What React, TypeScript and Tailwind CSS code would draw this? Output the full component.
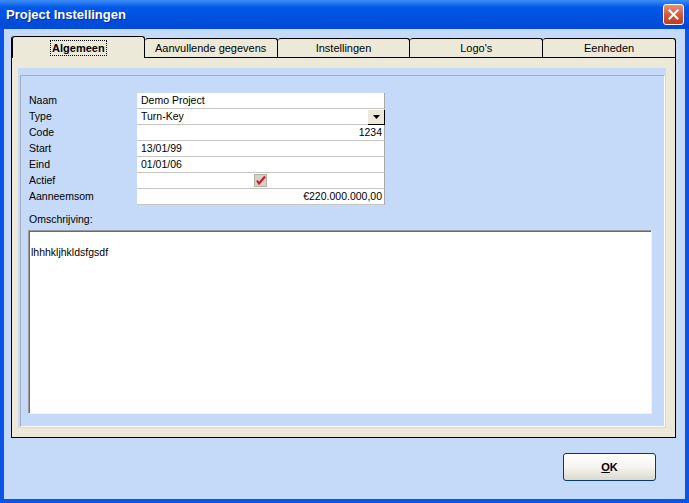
import type { ReactNode } from "react"

const TABS = ["Algemeen", "Aanvullende gegevens", "Instellingen", "Logo's", "Eenheden"]

interface Row {
  label: string
  value?: string
  align?: "left" | "right"
  kind?: "text" | "select" | "check"
}

const ROWS: Row[] = [
  { label: "Naam", value: "Demo Project" },
  { label: "Type", value: "Turn-Key", kind: "select" },
  { label: "Code", value: "1234", align: "right" },
  { label: "Start", value: "13/01/99" },
  { label: "Eind", value: "01/01/06" },
  { label: "Actief", kind: "check" },
  { label: "Aanneemsom", value: "€220.000.000,00", align: "right" },
]

function CloseButton() {
  return (
    <div className="flex h-[21px] w-[21px] items-center justify-center rounded-[3px] border border-white bg-linear-to-b from-[#e9917a] via-[#d9583a] to-[#c23b1d]">
      <svg width="11" height="11" viewBox="0 0 11 11">
        <path d="M1.5 1.5 L9.5 9.5 M9.5 1.5 L1.5 9.5" stroke="#fff" strokeWidth="2" strokeLinecap="square" />
      </svg>
    </div>
  )
}

function Tab({ label, active }: { label: string; active: boolean }) {
  if (active) {
    return (
      <div className="relative z-10 -mb-px flex h-[22px] w-[133px] items-start justify-center rounded-t-[3px] border-x border-t border-black bg-[#ece9d8] pt-[3px]">
        <span className="border border-dotted border-black px-[1px] text-[11px] leading-[14px] font-bold">{label}</span>
      </div>
    )
  }
  return (
    <div className="flex h-[19px] w-[133px] items-center justify-center rounded-t-[3px] border-r border-t border-black bg-[#ece9d8] text-[11px] leading-[14px]">
      {label}
    </div>
  )
}

function Field({ row }: { row: Row }) {
  let inner: ReactNode = null
  if (row.kind === "select") {
    inner = (
      <>
        <span className="flex-1 pl-[4px]">{row.value}</span>
        <div className="flex h-[15px] w-[17px] items-center justify-center border-l border-t border-white border-r-black border-b-black bg-[#ece9d8] shadow-[1px_1px_0_#000]">
          <svg width="7" height="4" viewBox="0 0 7 4">
            <path d="M0 0 H7 L3.5 4 Z" fill="#000" />
          </svg>
        </div>
      </>
    )
  } else if (row.kind === "check") {
    inner = (
      <div className="flex flex-1 justify-center">
        <svg width="13" height="13" viewBox="0 0 13 13">
          <rect x="0.5" y="0.5" width="12" height="12" fill="#d4d0cc" stroke="#b4b0a8" />
          <path d="M3 6.5 L5 9.5 L11 2.5" stroke="#d8141c" strokeWidth="2" fill="none" />
        </svg>
      </div>
    )
  } else {
    inner = <span className={`flex-1 ${row.align === "right" ? "pr-[2px] text-right" : "pl-[4px]"}`}>{row.value}</span>
  }
  return (
    <div className="flex h-[16px] items-center border-b border-r border-b-[#c4c4c4] border-r-[#a8a8a8] bg-white text-[10.5px] leading-[15px]">
      {inner}
    </div>
  )
}

export default function App() {
  return (
    <div className="flex h-[503px] w-[689px] flex-col font-['Liberation_Sans',Arial,sans-serif] text-black select-none">
      <div className="flex h-[29px] items-center justify-between bg-linear-to-b from-[#3b8cf6] via-[#0058e8] via-25% to-[#0049d6] pl-[6px] pr-[5px]">
        <span className="text-[13px] font-bold text-white [text-shadow:1px_1px_0_#0b2a8a]">Project Instellingen</span>
        <CloseButton />
      </div>
      <div className="flex flex-1 flex-col border-x-4 border-b-4 border-[#0a55e6] bg-[#c4daf8]">
        <div className="ml-[7px] mt-[7px] w-[665px]">
          <div className="flex h-[21px] items-end border-l border-black rounded-tl-[3px]">
            {TABS.map((t, i) => (
              <Tab key={t} label={t} active={i === 0} />
            ))}
          </div>
          <div className="flex h-[381px] flex-col border border-black bg-[#ece9d8] pb-[9px] pl-[6px] pr-[9px] pt-[10px]">
            <div className="flex flex-1 flex-col bg-[#c4daf8] pb-[1px] pl-[2px] pr-[1px] pt-[7px]">
              <div className="flex flex-1 flex-col border border-b-white border-l-[#a6adb8] border-r-white border-t-[#a6adb8] pl-[7px] pt-[17px]">
                <div className="grid grid-cols-[109px_248px]">
                  {ROWS.map((r) => (
                    <div key={r.label} className="contents">
                      <div className="h-[16px] pl-[1px] text-[10.5px] leading-[15px]">{r.label}</div>
                      <Field row={r} />
                    </div>
                  ))}
                </div>
                <div className="mt-[8px] pl-[1px] text-[10.5px] leading-[13px]">Omschrijving:</div>
                <div className="mt-[4px] h-[184px] w-[624px] border border-b-[#f2f2f2] border-l-[#9a9a9a] border-r-[#f2f2f2] border-t-[#9a9a9a] bg-white pl-[2px] pt-[2px] text-[10.5px] leading-[13px] shadow-[inset_1px_1px_0_#6a6a6a]">
                  <div className="h-[13px]" />
                  <div>lhhhkljhkldsfgsdf</div>
                </div>
              </div>
            </div>
          </div>
        </div>
        <div className="mr-[29px] mt-[15px] flex justify-end">
          <div className="flex h-[28px] w-[93px] items-center justify-center rounded-[3px] border border-[#003c74] bg-linear-to-b from-[#ffffff] via-[#f5f4ef] to-[#dcd8cb] text-[11px] font-bold">
            <span>
              <span className="underline">O</span>K
            </span>
          </div>
        </div>
      </div>
    </div>
  )
}
